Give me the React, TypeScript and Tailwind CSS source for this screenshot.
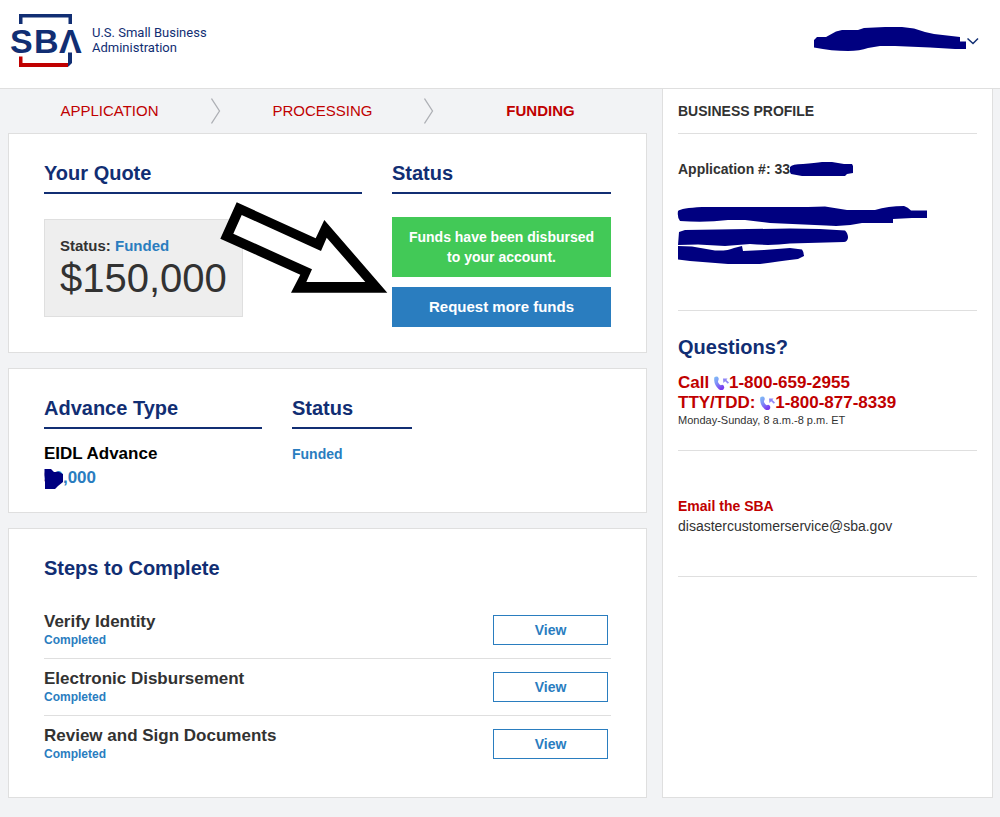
import type { ReactNode } from "react";

const STAGES = [
  { label: "APPLICATION", active: false },
  { label: "PROCESSING", active: false },
  { label: "FUNDING", active: true }
];

const STEPS = [
  { id: "identity", title: "Verify Identity", status: "Completed" },
  { id: "disbursement", title: "Electronic Disbursement", status: "Completed" },
  { id: "documents", title: "Review and Sign Documents", status: "Completed" }
];

function Logo() {
  return (
    <a href="#" className="flex items-start gap-[10px] text-[#112e73]">
      <svg width="74" height="56" viewBox="8 12 74 56" aria-hidden="true">
        <path d="M19 24V14H72V24H68.500V17.500H22.500V24Z" fill="#112e73" />
        <path d="M19 56.500H22.500V63H68V67H19Z" fill="#c00000" />
        <path d="M68 52.500H72V63L68.500 66.500H68Z" fill="#112e73" />
        <text
          x="10 34 59"
          y="53"
          fontSize="34"
          fontWeight="700"
          fill="#112e73"
          className="font-['Liberation_Sans',Arial,sans-serif]"
        >
          SBΛ
        </text>
      </svg>
      <span className="pt-[13px] font-[Roboto,sans-serif] text-[13px] leading-[15px]">
        U.S. Small Business
        <br />
        Administration
      </span>
    </a>
  );
}

function PhoneIcon({ id }: { id: string }) {
  return (
    <svg width="15" height="15" viewBox="0 0 15 15" className="inline-block align-[-3px]" aria-hidden="true">
      <defs>
        <linearGradient id={id} x1="0" y1="0" x2="0.5" y2="1">
          <stop offset="0" stopColor="#7fc0f5" />
          <stop offset="0.5" stopColor="#8090f8" />
          <stop offset="1" stopColor="#7a3cf0" />
        </linearGradient>
      </defs>
      <path
        d="M.4 1.200Q2 0 3.800.7Q5.200 2 4.600 3.800Q3.600 5.200 4.200 6.600Q5.200 8.800 6.800 9.200Q8.400 8 9.800 9.800Q11 11.800 9.400 13.400Q7.400 14.800 4.800 13.200Q.6 9.800.2 4.600Q0 2.400.4 1.200Z"
        fill={`url(#${id})`}
      />
      <path d="M9 2.500H13.500L12.300 3.900L15 6.600L13.800 7.800L11.200 5.200L9.400 7Z" fill="#8f86f5" />
    </svg>
  );
}

function Card({ children }: { children: ReactNode }) {
  return (
    <section className="relative border border-[#dfdfdf] bg-white px-[35px] pt-[27px]">{children}</section>
  );
}

function Heading({ children }: { children: ReactNode }) {
  return (
    <h2 className="border-b-2 border-[#112e73] pb-[7px] text-xl leading-6 font-bold text-[#112e73]">{children}</h2>
  );
}

function PointerArrow() {
  return (
    <svg
      width="169"
      height="92"
      viewBox="220 202 169 92"
      className="pointer-events-none absolute top-[68px] left-[211px]"
      aria-hidden="true"
    >
      <path
        d="M236.700 202.300L315.700 238.300L324.300 220L387.300 292.700H291L300.300 274.700L220.300 238.700Z"
        fill="#000"
      />
      <path d="M241.700 215L321 251L326.700 237.700L365.300 282H306.300L312 269.300L233.300 233.700Z" fill="#fff" />
    </svg>
  );
}

function StageBar() {
  return (
    <nav aria-label="Progress">
      <ol className="flex h-11 items-center">
        {STAGES.map((stage, i) => (
          <li key={stage.label} className="flex flex-1 items-center text-[15px] leading-5 text-[#c00000]">
            <span className={stage.active ? "flex-1 text-center font-bold" : "flex-1 text-center"}>
              {stage.label}
            </span>
            {i < STAGES.length - 1 ? (
              <svg width="10" height="28" viewBox="0 0 10 28" aria-hidden="true">
                <path d="M.5 1.500L8.500 14L.5 26.500" fill="none" stroke="#aeb0b5" strokeWidth="1.300" />
              </svg>
            ) : null}
          </li>
        ))}
      </ol>
    </nav>
  );
}

function QuoteCard() {
  return (
    <Card>
      <div className="grid grid-cols-[1fr_219px] gap-[30px] pb-[25px]">
        <div>
          <Heading>Your Quote</Heading>
          <div className="mt-[25px] w-fit border border-[#dfdfdf] bg-[#eee] px-[15px] py-4 text-[#323232]">
            <p className="text-[15px] leading-5 font-bold">
              Status: <span className="text-[#2a7dbf]">Funded</span>
            </p>
            <p className="text-[40px] leading-[44px]">$150,000</p>
          </div>
        </div>
        <div>
          <Heading>Status</Heading>
          <p className="mt-[23px] bg-[#42c957] px-3 py-[10px] text-center text-sm leading-5 font-bold text-white">
            Funds have been disbursed to your account.
          </p>
          <button
            type="button"
            className="mt-[10px] h-10 w-full bg-[#2a7dbf] text-[15px] leading-5 font-bold text-white"
          >
            Request more funds
          </button>
        </div>
      </div>
      <PointerArrow />
    </Card>
  );
}

function AdvanceCard() {
  return (
    <Card>
      <div className="grid grid-cols-[218px_120px] gap-[30px] pb-[22px] font-bold">
        <div>
          <Heading>Advance Type</Heading>
          <p className="mt-[13px] text-[17px] leading-6 text-black">EIDL Advance</p>
          <p className="relative text-[17px] leading-6 text-[#2a7dbf]">
            $0,000
            <svg width="21" height="22" viewBox="0 0 21 22" className="absolute top-[2px] left-0" aria-hidden="true">
              <path d="M.5 1H7L10 4H15L19 6V14L14 18L11 21H1V14L.5 8Z" fill="#000080" />
            </svg>
          </p>
        </div>
        <div>
          <Heading>Status</Heading>
          <p className="mt-[13px] text-sm leading-6 text-[#2a7dbf]">Funded</p>
        </div>
      </div>
    </Card>
  );
}

function StepsCard() {
  return (
    <Card>
      <h2 className="text-xl leading-6 font-bold text-[#112e73]">Steps to Complete</h2>
      <ul className="mt-[22px] pb-[25px]">
        {STEPS.map((step) => (
          <li
            key={step.id}
            className="flex items-center justify-between border-b border-[#dfdfdf] py-[9px] pr-[3px] font-bold last:border-b-0"
          >
            <div className="pb-[2px]">
              <p className="text-[17px] leading-[22px] text-[#323232]">{step.title}</p>
              <p className="text-xs leading-[14px] text-[#2a7dbf]">{step.status}</p>
            </div>
            <button
              type="button"
              className="h-[30px] w-[115px] border border-[#2a7dbf] bg-white text-sm leading-5 font-bold text-[#2a7dbf]"
            >
              View
            </button>
          </li>
        ))}
      </ul>
    </Card>
  );
}

function ProfilePanel() {
  return (
    <aside className="w-[331px] shrink-0 border border-t-0 border-[#dfdfdf] bg-white px-[15px] text-[#323232]">
      <h2 className="border-b border-[#dfdfdf] py-3 text-sm leading-5 font-bold">BUSINESS PROFILE</h2>

      <div className="border-b border-[#dfdfdf] pt-[25px] pb-[45px]">
        <p className="flex items-center text-sm leading-5 font-bold">
          Application #: 33
          <svg width="64" height="16" viewBox="790 160 64 16" aria-label="hidden number">
            <path
              d="M790 166Q792 163 803 163Q815 162 822 161H832L844 163H852L853 165V172L847 173L845 175H802L791 173Q789 170 790 166Z"
              fill="#000080"
            />
          </svg>
        </p>
        <svg
          width="251"
          height="60"
          viewBox="677 205 251 60"
          className="mt-[26px] -ml-px block"
          aria-label="hidden address"
        >
          <g fill="#000080">
            <path d="M678 211Q681 208 702 207H738L808 207L825 206.500L847 210H875Q888 206 904 206Q908 207 911 210.500H927V218H912L893 219V223H862Q845 227 826 225.500L770 223L745 220H728Q705 223 680 221Q677 217 678 211Z" />
            <path d="M679 232L685 230L790 228.500L820 229L845 230.500Q848 233 848 238Q847 242 844 242L790 243.500Q770 246 750 244L725 246L698 244.500L678 245Z" />
            <path d="M678 246L692 246.500L715 250.500Q728 251 734 248L742 246L743 251L764 250L790 248L802 249.500Q804 252 804 256L798 259Q775 262 760 264H728L690 261L678 259.500Z" />
          </g>
        </svg>
      </div>

      <div className="border-b border-[#dfdfdf] pt-6 pb-[23px]">
        <h2 className="text-xl leading-6 font-bold text-[#112e73]">Questions?</h2>
        <p className="mt-[14px] text-[17px] leading-5 font-bold text-[#c00000]">
          Call{" "}
          <a href="tel:18006592955">
            <PhoneIcon id="call" />
            1-800-659-2955
          </a>
        </p>
        <p className="text-[17px] leading-5 font-bold text-[#c00000]">
          TTY/TDD:{" "}
          <a href="tel:18008778339">
            <PhoneIcon id="tty" />
            1-800-877-8339
          </a>
        </p>
        <p className="text-[11px] leading-[14px]">Monday-Sunday, 8 a.m.-8 p.m. ET</p>
      </div>

      <div className="border-b border-[#dfdfdf] pt-[45px] pb-10 text-sm leading-5">
        <h3 className="font-bold text-[#c00000]">Email the SBA</h3>
        <a href="mailto:disastercustomerservice@sba.gov">disastercustomerservice@sba.gov</a>
      </div>
    </aside>
  );
}

export default function App() {
  return (
    <div className="min-h-screen bg-[#f2f3f5] font-['Liberation_Sans',Arial,sans-serif]">
      <header className="flex items-start justify-between border-b border-[#dfdfdf] bg-white pt-3 pr-[21px] pb-5 pl-2">
        <Logo />
        <button type="button" aria-label="Account menu" className="mt-3">
          <svg width="165" height="30" viewBox="814 24 165 30" aria-hidden="true">
            <path
              d="M814 40L817 37H826L836 31.500L842 30H858L864 28L885 27H902L914 28.500L925 32L934 34L960 37V41.500H966V49H955L930 47.500L895 46H880L868 48Q860 51 848 51Q832 51 814 47.500Z"
              fill="#000080"
            />
            <path d="M967.500 38.500L973 43.500L978 38.500" fill="none" stroke="#112e73" strokeWidth="1.500" />
          </svg>
        </button>
      </header>

      <div className="flex gap-[15px] pr-[7px] pb-[19px] pl-2">
        <main className="min-w-0 flex-1">
          <StageBar />
          <div className="flex flex-col gap-[15px]">
            <QuoteCard />
            <AdvanceCard />
            <StepsCard />
          </div>
        </main>
        <ProfilePanel />
      </div>
    </div>
  );
}
